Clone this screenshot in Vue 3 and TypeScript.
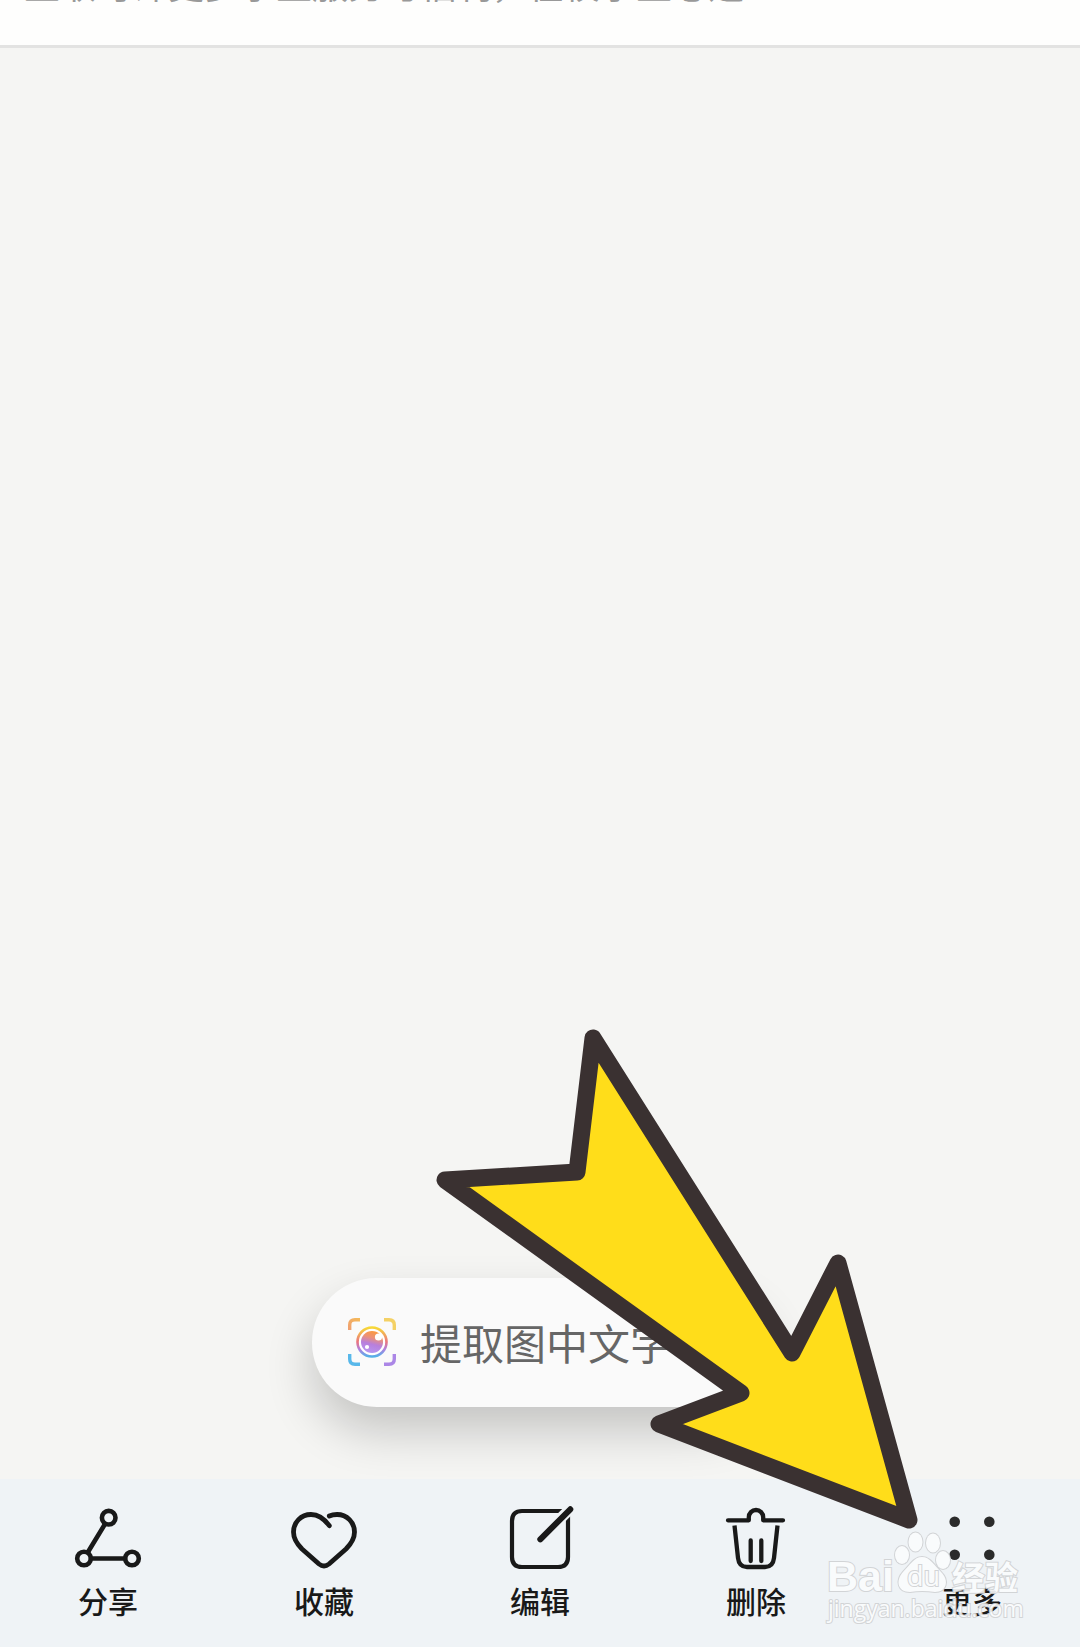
<script setup lang="ts">
interface Action {
  id: string
  label: string
}

const actions: Action[] = [
  { id: 'share', label: '分享' },
  { id: 'favorite', label: '收藏' },
  { id: 'edit', label: '编辑' },
  { id: 'delete', label: '删除' },
  { id: 'more', label: '更多' },
]
</script>

<template>
  <div class="page">
    <header class="notice">
      <p class="notice-text">立取可详更多学生服务与福利，在校学生必选</p>
    </header>

    <main class="viewer">
      <button type="button" class="extract">
        <svg class="extract-icon" viewBox="0 0 48 48" aria-hidden="true">
          <defs>
            <linearGradient id="ring" x1="0" y1="0" x2="0" y2="1">
              <stop offset="0" stop-color="#f7d936" />
              <stop offset="0.5" stop-color="#ea7480" />
              <stop offset="0.75" stop-color="#b080e0" />
              <stop offset="1" stop-color="#55b0e8" />
            </linearGradient>
            <linearGradient id="lens" x1="0.65" y1="0" x2="0.4" y2="1">
              <stop offset="0" stop-color="#fb9b3c" />
              <stop offset="0.3" stop-color="#ee9275" />
              <stop offset="0.6" stop-color="#b87fdc" />
              <stop offset="1" stop-color="#b795f0" />
            </linearGradient>
            <linearGradient id="warm" x1="0" y1="1" x2="1" y2="0">
              <stop offset="0" stop-color="#f0a070" />
              <stop offset="1" stop-color="#f4b95a" />
            </linearGradient>
          </defs>
          <g fill="none" stroke-width="3.4">
            <path d="M1.700 12V7q0-5.300 5.300-5.300h5" stroke="url(#warm)" />
            <path d="M36 1.700h5q5.300 0 5.300 5.300v5" stroke="#f4d165" />
            <path d="M1.700 36v5q0 5.300 5.300 5.300h5" stroke="#58b8ea" />
            <path d="M46.300 36v5q0 5.300-5.300 5.300h-5" stroke="#ab86e6" />
          </g>
          <circle cx="24" cy="24" r="14.5" fill="#fff" stroke="url(#ring)" stroke-width="2.6" />
          <circle cx="24" cy="24" r="11" fill="url(#lens)" />
          <circle cx="30.5" cy="19" r="3.6" fill="#fff" />
          <circle cx="19" cy="29" r="2.1" fill="#fff" />
        </svg>
        <span>提取图中文字</span>
      </button>
    </main>

    <nav class="toolbar">
      <button v-for="action in actions" :key="action.id" type="button" class="action">
        <svg class="action-icon" viewBox="0 0 72 72" aria-hidden="true">
          <g v-if="action.id === 'share'" stroke-width="4.6">
            <path d="M33 21 16 49M19 55.5h34" />
            <circle cx="36.7" cy="14.7" r="6.8" />
            <circle cx="12" cy="55.5" r="6.8" />
            <circle cx="60" cy="55.5" r="6.8" />
          </g>
          <path
            v-else-if="action.id === 'favorite'"
            stroke-width="4.8"
            d="M41.3 22.7C36 15.500 31 11.500 23 11.500C13 11.500 5.500 19.500 5.500 29C5.500 36 9 41 14 46L31 61Q36 65 41 61L58 46C63 41 66.500 36 66.500 29C66.500 19.500 59 11.500 49 11.500C46 11.500 43.500 12 41.300 13"
          />
          <g v-else-if="action.id === 'edit'">
            <path stroke-width="4.200" d="M60 8H18Q8 8 8 18V54Q8 64 18 64H54Q64 64 64 54V12" />
            <path class="gap" stroke-width="11" d="M48 24 70 2" />
            <path stroke-width="6" d="M36.300 36.300 66.300 6.300" />
          </g>
          <g v-else-if="action.id === 'delete'" stroke-width="4.300">
            <path d="M8 17.300H28.800V14.200a7.200 7.200 0 0 1 14.400 0V17.300H63" />
            <path class="butt" d="M14.500 22.500 18 55q1 9 9 9h18q8 0 9-9L57.500 22.500" />
            <path d="M30.700 37.500V58M41.300 37.500V58" />
          </g>
          <g v-else class="dots">
            <circle cx="18.700" cy="18.700" r="5.300" />
            <circle cx="53.300" cy="18.700" r="5.300" />
            <circle cx="18.700" cy="51.700" r="5.300" />
            <circle cx="53.300" cy="51.700" r="5.300" />
          </g>
        </svg>
        <span class="action-label">{{ action.label }}</span>
      </button>
    </nav>

    <svg class="pointer" viewBox="0 0 500 510" aria-hidden="true">
      <path d="M163 18 362 333 408 243 479 500 229 404 311 373 15 160 147 152Z" />
    </svg>

    <svg class="watermark" viewBox="0 0 210 105" aria-label="Baidu 经验">
      <g class="mark">
        <text class="brand" x="7" y="66">Bai</text>
        <ellipse cx="82" cy="30" rx="7" ry="9" />
        <ellipse cx="95.500" cy="17" rx="7" ry="9.500" />
        <ellipse cx="113" cy="18" rx="7" ry="9.500" />
        <ellipse cx="123" cy="35" rx="7" ry="9" />
        <path d="M102 32C110 32 114 40 121 47C130 56 126 67 115 67Q102 65 90 67C78 67 75 56 83 47C90 40 94 32 102 32Z" />
        <text class="du" x="87" y="61">du</text>
        <text class="product" x="132" y="65">经验</text>
      </g>
      <text class="mark site" x="8" y="92">jingyan.baidu.com</text>
    </svg>
  </div>
</template>

<style>
body {
  margin: 0;
}
</style>

<style scoped>
.page {
  position: relative;
  display: flex;
  flex-direction: column;
  min-height: 100vh;
  overflow: hidden;
  background: #f5f5f3;
  font-family: "Noto Sans CJK SC", sans-serif;
}

.notice {
  display: flex;
  align-items: flex-end;
  height: 45px;
  padding: 0 24px;
  border-bottom: 3px solid #e3e3e2;
  background: #fefefd;
}

.notice-text {
  margin: 0 0 38px;
  color: #999;
  font-size: 36px;
  line-height: 48px;
  white-space: nowrap;
}

.viewer {
  flex: 1;
  display: flex;
  flex-direction: column;
  justify-content: flex-end;
  align-items: center;
  padding-bottom: 72px;
}

.extract {
  display: flex;
  align-items: center;
  gap: 24px;
  width: 456px;
  height: 129px;
  padding: 0 36px 2px;
  border: 0;
  border-radius: 65px;
  background: #fafafa;
  box-shadow: 0 24px 48px rgba(0, 0, 0, 0.2);
  color: #666;
  font-family: inherit;
  font-size: 42px;
  line-height: 60px;
  white-space: nowrap;
}

.extract-icon {
  flex: none;
  width: 48px;
  height: 48px;
}

.toolbar {
  position: relative;
  display: flex;
  height: 168px;
  background: #eff3f6;
}

.action {
  flex: 1;
  display: flex;
  flex-direction: column;
  align-items: center;
  gap: 6px;
  padding: 24px 0 0;
  border: 0;
  background: none;
  color: #191919;
  font-family: inherit;
}

.action-icon {
  width: 72px;
  height: 72px;
  fill: none;
  stroke: #191919;
  stroke-linecap: round;
  stroke-linejoin: round;
}

.gap {
  stroke: #eff3f6;
  stroke-linecap: butt;
}

.butt {
  stroke-linecap: butt;
}

.dots {
  fill: #2b2b2b;
  stroke: none;
}

.action-label {
  font-size: 30px;
  font-weight: 500;
  line-height: 38px;
}

.pointer {
  position: absolute;
  right: 150px;
  bottom: 117px;
  width: 500px;
  height: 510px;
  fill: #ffdd1a;
  stroke: #3a3131;
  stroke-width: 17px;
  stroke-linejoin: round;
  pointer-events: none;
}

.watermark {
  position: absolute;
  right: 50px;
  bottom: 17px;
  width: 210px;
  height: 105px;
  pointer-events: none;
}

.mark {
  fill: #fbfcfd;
  stroke: #cfd1d3;
  stroke-width: 2px;
  paint-order: stroke;
  opacity: 0.9;
}

.brand {
  font: bold 43px "Liberation Sans", sans-serif;
}

.du {
  font: 27px "Open Sans", sans-serif;
}

.product {
  font: bold 33px "Noto Sans CJK SC", sans-serif;
}

.site {
  font: 23px "Open Sans", sans-serif;
}
</style>
